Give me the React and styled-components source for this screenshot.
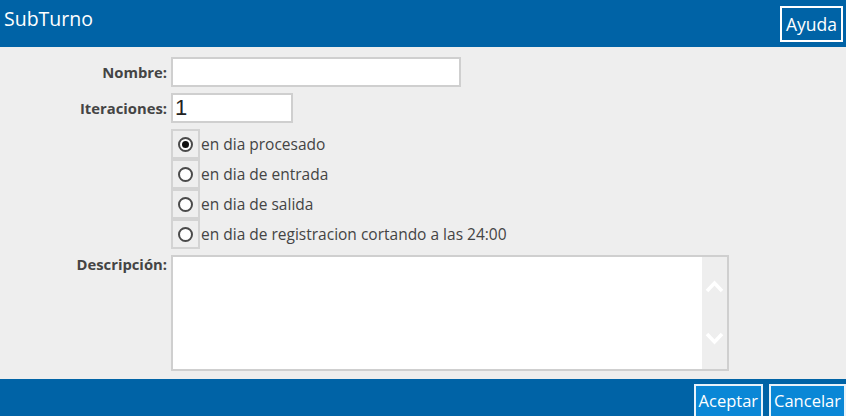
import { createGlobalStyle, styled } from "styled-components";

const GlobalStyle = createGlobalStyle`
  html, body {
    margin: 0;
    padding: 0;
    height: 100%;
    overflow: hidden;
  }
  body {
    font-family: "Open Sans", "Noto Sans", sans-serif;
    background: #eeeeee;
  }
  #root {
    height: 100%;
  }
`;

const options = [
  "en dia procesado",
  "en dia de entrada",
  "en dia de salida",
  "en dia de registracion cortando a las 24:00",
];

const App = () => {
  return (
    <Page>
      <GlobalStyle />
      <Header>
        <Title>SubTurno</Title>
        <HeaderButton>Ayuda</HeaderButton>
      </Header>
      <Main>
        <FormGrid>
          <Label>Nombre:</Label>
          <TextInput $width={290} />
          <Label>Iteraciones:</Label>
          <NumberInput defaultValue="1" />
          <span />
          <RadioList>
            {options.map((text, i) => (
              <RadioRow key={text}>
                <RadioBox>
                  <RadioCircle $checked={i === 0} />
                </RadioBox>
                <RadioText>{text}</RadioText>
              </RadioRow>
            ))}
          </RadioList>
          <Label $top>Descripción:</Label>
          <AreaBox>
            <AreaText />
            <ScrollBar>
              <svg width="19" height="13" viewBox="0 0 19 13">
                <path d="M2 11 L9.5 3 L17 11" fill="none" stroke="#fff" strokeWidth="3.5" />
              </svg>
              <svg width="19" height="13" viewBox="0 0 19 13">
                <path d="M2 2 L9.5 10 L17 2" fill="none" stroke="#fff" strokeWidth="3.5" />
              </svg>
            </ScrollBar>
          </AreaBox>
        </FormGrid>
      </Main>
      <Footer>
        <FooterButton>Aceptar</FooterButton>
        <FooterButton>Cancelar</FooterButton>
      </Footer>
    </Page>
  );
};

const Page = styled.div`
  display: flex;
  flex-direction: column;
  height: 100vh;
`;

const Header = styled.div`
  height: 47px;
  background: #0063a6;
  display: flex;
  align-items: flex-start;
  justify-content: space-between;
  padding: 0 3px 0 4px;
  box-sizing: border-box;
`;

const Title = styled.h1`
  margin: 5px 0 0 0;
  font-size: 19.5px;
  font-weight: 400;
  color: #ffffff;
  font-family: "Open Sans", sans-serif;
`;

const HeaderButton = styled.button`
  margin-top: 6px;
  width: 63px;
  height: 36px;
  background: transparent;
  border: 2px solid #ffffff;
  color: #ffffff;
  font-family: "Open Sans", sans-serif;
  font-size: 17.5px;
  padding: 0;
`;

const Main = styled.div`
  flex: 1;
  padding-top: 10px;
`;

const FormGrid = styled.div`
  display: grid;
  grid-template-columns: 167px auto;
  column-gap: 4px;
  row-gap: 6px;
  justify-content: start;
  align-items: center;
`;

const Label = styled.label`
  justify-self: end;
  align-self: ${(p) => (p.$top ? "start" : "center")};
  margin-top: ${(p) => (p.$top ? "-1px" : "0")};
  font-size: 14.8px;
  font-weight: 700;
  color: #444444;
`;

const TextInput = styled.input`
  width: ${(p) => p.$width}px;
  height: 30px;
  box-sizing: border-box;
  border: 2px solid #cfcfcf;
  background: #ffffff;
  margin: 0;
  outline: none;
`;

const NumberInput = styled.input`
  width: 122px;
  height: 30px;
  box-sizing: border-box;
  border: 2px solid #cfcfcf;
  background: #ffffff;
  margin: 0;
  padding: 0 2px;
  font-family: "Liberation Sans", Arial, sans-serif;
  font-size: 22px;
  color: #222222;
  outline: none;
`;

const RadioList = styled.div`
  display: flex;
  flex-direction: column;
`;

const RadioRow = styled.div`
  display: flex;
  align-items: center;
  height: 30px;
`;

const RadioBox = styled.div`
  width: 29px;
  height: 30px;
  box-sizing: border-box;
  border: 2px solid #d3d3d3;
  display: flex;
  align-items: center;
  justify-content: center;
`;

const RadioCircle = styled.span`
  width: 15px;
  height: 15px;
  box-sizing: border-box;
  border-radius: 50%;
  border: 2px solid #4a4a4a;
  background: #ffffff;
  display: flex;
  align-items: center;
  justify-content: center;

  &::after {
    content: "";
    width: 7px;
    height: 7px;
    border-radius: 50%;
    background: #111111;
    display: ${(p) => (p.$checked ? "block" : "none")};
  }
`;

const RadioText = styled.span`
  margin-left: 1px;
  font-size: 15.5px;
  color: #444444;
`;

const AreaBox = styled.div`
  width: 558px;
  height: 116px;
  box-sizing: border-box;
  border: 2px solid #cfcfcf;
  background: #ffffff;
  display: flex;
`;

const AreaText = styled.textarea`
  flex: 1;
  border: none;
  resize: none;
  outline: none;
  margin: 0;
`;

const ScrollBar = styled.div`
  width: 25px;
  background: #eeeeee;
  display: flex;
  flex-direction: column;
  align-items: center;
  justify-content: space-between;
  padding: 23px 0 24px;
  box-sizing: border-box;
`;

const Footer = styled.div`
  height: 37px;
  background: #0063a6;
  display: flex;
  justify-content: flex-end;
  align-items: flex-start;
  gap: 6px;
  overflow: hidden;
`;

const FooterButton = styled.button`
  margin-top: 5px;
  height: 36px;
  padding: 0 3px 4px;
  background: #0a87d6;
  border: 2px solid #e8f2fa;
  color: #ffffff;
  font-family: "Open Sans", sans-serif;
  font-size: 16.5px;
`;

export default App;
